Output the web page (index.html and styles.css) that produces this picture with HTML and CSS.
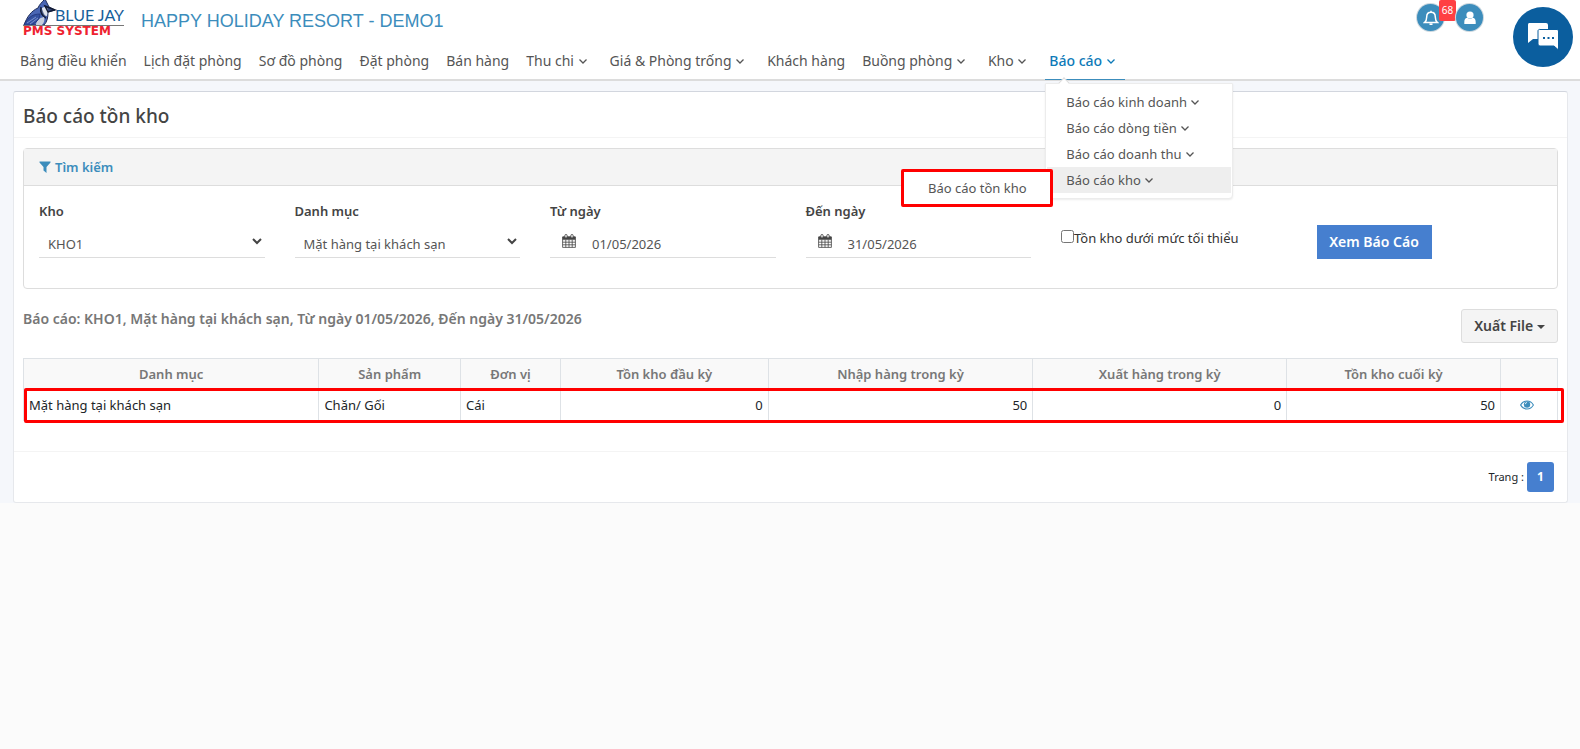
FILE: index.html
```html
<!DOCTYPE html>
<html lang="vi">
<head>
<meta charset="utf-8">
<title>Báo cáo tồn kho</title>
<link rel="stylesheet" href="styles.css">
</head>
<body>
<svg width="0" height="0" class="defs" aria-hidden="true">
  <symbol id="chev" viewBox="0 0 10 8"><path d="M1.500 2.500l3.500 3.500 3.500-3.500" fill="none" stroke="currentColor" stroke-width="1.300"/></symbol>
  <symbol id="cal" viewBox="0 0 14 14"><path d="M.6 3h12.8v10.4H.6zM.6 5.6h12.8M.6 8.2h12.8M.6 10.8h12.8M3.8 5.6v7.8M7 5.6v7.8M10.2 5.6v7.8" fill="none" stroke="currentColor" stroke-width=".8"/><path d="M.6 2.5h12.8v2.6H.6z" fill="currentColor"/><rect x="2.9" y=".5" width="2.2" height="3.4" rx="1" fill="#fff" stroke="currentColor" stroke-width=".9"/><rect x="8.9" y=".5" width="2.2" height="3.4" rx="1" fill="#fff" stroke="currentColor" stroke-width=".9"/></symbol>
</svg>
<header class="header">
  <div class="brand-row">
    <a class="logo" href="#" aria-label="Blue Jay PMS System">
      <svg viewBox="0 0 102 40" width="102" height="40">
        <path d="M1 25C4 17 8 11 15 8c1-3 4-6 7-9 1 3 3 5 4 8l6 3-7 2c0 6-1 10-4 13z" fill="#4a66b4" stroke="#1d2a55"/>
        <path d="M19 8c3-2 6-1 6 2l-1 6c-3 0-5-3-5-8z" fill="#dfe4ee"/>
        <path d="M18 7c-1 5 1 9 5 11M22 6l10 4-7 2z" fill="#222b48" fill-opacity=".5" stroke="#111a33" stroke-width="1.400"/>
        <path d="M13 25c0-4 3-7 8-8 1 3 0 6-2 8z" fill="#c6cedd"/>
        <path d="M1 25c4-8 9-11 16-11 0 5-4 9-9 11z" fill="#3350a0" stroke="#22357a" stroke-width=".8"/>
        <path d="M4 23l9-6M7 24l8-6" stroke="#8ea2d8" stroke-width=".8"/>
        <path d="M0 25.500h101" stroke="#777" stroke-width="1"/>
        <text x="32" y="21" class="logo-blue">BLUE JAY</text>
        <text x="0" y="35" class="logo-red">PMS SYSTEM</text>
      </svg>
    </a>
    <h1 class="hotel">HAPPY HOLIDAY RESORT - DEMO1</h1>
    <div class="user-tools">
      <button class="round" aria-label="Thông báo"><svg width="16" height="16" viewBox="0 0 16 16"><path d="M1.500 12.500h13c-2-1.500-2.200-3-2.200-5.500 0-3-1.800-4.700-4.300-4.700S3.700 4 3.700 7c0 2.500-.2 4-2.200 5.500zM8 .8v1.500M6.500 14.200h3" fill="none" stroke="#fff" stroke-width="1.500"/></svg><span class="badge">68</span></button>
      <button class="round" aria-label="Tài khoản"><svg width="14" height="14" viewBox="0 0 14 14"><circle cx="7" cy="4" r="3.600" fill="#fff"/><path d="M1.300 13V11c0-3 1.500-4 3-4.200 1.500 1.400 3.900 1.400 5.400 0 1.500.2 3 1.200 3 4.200v2z" fill="#fff"/></svg></button>
    </div>
    <button class="chat" aria-label="Chat"><svg width="32" height="30" viewBox="0 0 32 30"><path d="M2 1h17a2 2 0 0 1 2 2v14H6l-5 4V3a2 2 0 0 1 1-2z" fill="#fff"/><path d="M13 7.500h17a1.500 1.500 0 0 1 1.500 1.500v19l-4.500-4H13a2 2 0 0 1-2-2V9a1.500 1.500 0 0 1 2-1.500z" fill="#fff" stroke="#0b5e9e"/><path d="M16 16h2m2.500 0h2m2.500 0h2" stroke="#0b5e9e" stroke-width="2"/></svg></button>
  </div>
  <nav class="nav">
    <a href="#">Bảng điều khiển</a>
    <a href="#">Lịch đặt phòng</a>
    <a href="#">Sơ đồ phòng</a>
    <a href="#">Đặt phòng</a>
    <a href="#">Bán hàng</a>
    <a href="#" class="has-sub">Thu chi <svg class="chev"><use href="#chev"/></svg></a>
    <a href="#" class="has-sub">Giá &amp; Phòng trống <svg class="chev"><use href="#chev"/></svg></a>
    <a href="#">Khách hàng</a>
    <a href="#" class="has-sub">Buồng phòng <svg class="chev"><use href="#chev"/></svg></a>
    <a href="#" class="has-sub">Kho <svg class="chev"><use href="#chev"/></svg></a>
    <div class="nav-open">
      <a href="#" class="has-sub active">Báo cáo <svg class="chev"><use href="#chev"/></svg></a>
      <div class="menu">
        <a href="#">Báo cáo kinh doanh <svg class="chev"><use href="#chev"/></svg></a>
        <a href="#">Báo cáo dòng tiền <svg class="chev"><use href="#chev"/></svg></a>
        <a href="#">Báo cáo doanh thu <svg class="chev"><use href="#chev"/></svg></a>
        <a href="#" class="hover">Báo cáo kho <svg class="chev"><use href="#chev"/></svg></a>
        <div class="submenu"><a href="#">Báo cáo tồn kho</a></div>
      </div>
    </div>
  </nav>
</header>
<main class="page">
  <section class="card">
    <h2 class="card-title">Báo cáo tồn kho</h2>
    <div class="card-body">
      <form class="panel">
        <div class="panel-head"><svg width="12" height="12" viewBox="0 0 12 12"><path d="M.5.500h11v1L7.500 6v6L4.500 9.500V6l-4-4.500z" fill="currentColor"/></svg>Tìm kiếm</div>
        <div class="filters">
          <div class="field"><label for="kho">Kho</label><div class="control"><select id="kho"><option>KHO1</option></select><svg class="arrow" viewBox="0 0 10 7"><path d="M1 1l4 4 4-4" fill="none" stroke="currentColor" stroke-width="2"/></svg></div></div>
          <div class="field"><label for="dm">Danh mục</label><div class="control"><select id="dm"><option>Mặt hàng tại khách sạn</option></select><svg class="arrow" viewBox="0 0 10 7"><path d="M1 1l4 4 4-4" fill="none" stroke="currentColor" stroke-width="2"/></svg></div></div>
          <div class="field"><label for="from">Từ ngày</label><div class="control date"><svg class="cal"><use href="#cal"/></svg><input id="from" type="text" value="01/05/2026"></div></div>
          <div class="field"><label for="to">Đến ngày</label><div class="control date"><svg class="cal"><use href="#cal"/></svg><input id="to" type="text" value="31/05/2026"></div></div>
          <div class="field check"><input type="checkbox" id="min"><label for="min">Tồn kho dưới mức tối thiểu</label></div>
          <div class="field submit"><button type="button" class="primary">Xem Báo Cáo</button></div>
        </div>
      </form>
      <div class="summary">
        <p>Báo cáo: KHO1, Mặt hàng tại khách sạn, Từ ngày 01/05/2026, Đến ngày 31/05/2026</p>
        <button type="button" class="export">Xuất File <span class="caret"></span></button>
      </div>
      <div class="table-wrap">
        <table>
          <colgroup><col class="c1"><col class="c2"><col class="c3"><col class="c4"><col class="c5"><col class="c6"><col class="c7"><col class="c8"></colgroup>
          <thead><tr><th>Danh mục</th><th>Sản phẩm</th><th>Đơn vị</th><th>Tồn kho đầu kỳ</th><th>Nhập hàng trong kỳ</th><th>Xuất hàng trong kỳ</th><th>Tồn kho cuối kỳ</th><th></th></tr></thead>
          <tbody><tr><td>Mặt hàng tại khách sạn</td><td>Chăn/ Gối</td><td>Cái</td><td class="num">0</td><td class="num">50</td><td class="num">0</td><td class="num">50</td><td class="view"><a href="#" aria-label="Xem"><svg width="14" height="10" viewBox="0 0 14 10"><path d="M.6 5C2 2.500 4.300 1 7 1s5 1.500 6.400 4C12 7.500 9.700 9 7 9S2 7.500.6 5z" fill="none" stroke="currentColor" stroke-width="1.100"/><circle cx="7" cy="4.500" r="3.200" fill="currentColor"/><path d="M5.300 4.200A1.700 1.700 0 0 1 7 2.500" fill="none" stroke="#fff" stroke-width=".8"/></svg></a></td></tr></tbody>
        </table>
        <div class="marker"></div>
      </div>
    </div>
    <footer class="card-foot"><span>Trang :</span><button type="button" class="page-no">1</button></footer>
  </section>
</main>
</body>
</html>
```
FILE: styles.css
```css
* { box-sizing: border-box; }
body { margin: 0; background: #fbfbfb; color: #212529; font: 13px/20px "Noto Sans", "Open Sans", sans-serif; }
a { color: inherit; text-decoration: none; }
button, input, select { font: inherit; color: inherit; }
button { border: 0; padding: 0; cursor: pointer; }
.defs { position: absolute; }

.header { background: #fff; border-bottom: 2px solid #dcdcdc; position: relative; z-index: 2; }
.brand-row { display: flex; align-items: flex-start; height: 42px; padding: 0 7px 0 23px; }
.logo { display: block; }
.logo svg { display: block; overflow: visible; }
.logo-blue { font: 16px Lato, sans-serif; fill: #17609a; }
.logo-red { font: bold 12px "DejaVu Sans", sans-serif; fill: #ee2330; }
.hotel { margin: 0 0 0 16px; font: 18px/42px "Liberation Sans", Arial, sans-serif; color: #3c8dbc; }
.user-tools { display: flex; gap: 12px; margin: 4px 30px 0 auto; }
.round { position: relative; display: flex; align-items: center; justify-content: center; width: 27px; height: 27px; border-radius: 50%; background: #3c8dbc; box-shadow: 0 0 0 1px #ccd8df; }
.badge { position: absolute; left: 22px; top: -4px; width: 17px; height: 21px; border-radius: 2px; background: #ff4043; color: #fff; font-size: 10px; line-height: 21px; }
.chat { display: flex; align-items: center; justify-content: center; width: 60px; height: 60px; margin-top: 7px; border-radius: 50%; background: #0b5e9e; position: relative; z-index: 1; }

.nav { display: flex; gap: 9px; padding: 0 16px; color: #555; font-size: 14px; }
.nav > a, .nav-open > a { display: block; padding: 0 4px; line-height: 38px; height: 37px; white-space: nowrap; }
.nav .has-sub { padding-right: 9px; }
.nav .active { color: #0d7ab8; font-weight: 500; height: 38px; margin-bottom: -1px; border-bottom: 1px solid #3c8dbc; }
.nav-open { position: relative; }
.chev { width: 10px; height: 8px; vertical-align: 1px; }
.menu { position: absolute; left: 0; top: 41px; width: 188px; padding: 5px 1px; border: 1px solid #ececec; border-radius: 0 0 4px 4px; background: #fff; box-shadow: 0 1px 2px rgba(0,0,0,.08); }
.menu::before { content: ""; position: absolute; left: 14px; top: -5px; width: 7px; height: 7px; background: #fff; border: solid #ddd; border-width: 1px 0 0 1px; transform: rotate(45deg); }
.menu a { display: block; padding: 0 19px; font-size: 13px; line-height: 26px; white-space: nowrap; }
.menu .hover { background: #eee; }
.submenu { position: absolute; right: 179px; bottom: -9px; width: 152px; border: 3px solid #f00; border-radius: 2px; background: #fff; }
.submenu a { padding: 3px 0; text-align: center; }

.page { background: #f5f7fb; padding: 10px 12px 0 13px; }
.card { background: #fff; border: 1px solid #e6e8ec; border-top-color: #d2d6de; border-radius: 3px; }
.card-title { margin: 0; padding: 0 9px; font-size: 19px; font-weight: 500; line-height: 48px; height: 46px; color: #444; border-bottom: 1px solid #f4f4f4; }
.card-body { padding: 10px 9px 30px; }
.panel { border: 1px solid #ddd; border-radius: 4px; }
.panel-head { display: flex; align-items: center; gap: 4px; height: 37px; padding: 0 15px; background: #f4f4f4; border-bottom: 1px solid #ddd; color: #3c8dbc; font-weight: 600; }
.filters { display: grid; grid-template-columns: repeat(6, minmax(0, 1fr)); padding: 15px 0 29px; }
.field { padding: 0 15px; color: #555; }
.field > label { display: block; font-weight: 600; color: #444; }
.control { position: relative; display: flex; align-items: center; height: 37px; border-bottom: 1px solid #ddd; }
.control select { flex: 1; min-width: 0; appearance: none; border: 0; background: none; padding: 11px 9px 1px; height: 36px; }
.control input { flex: 1; min-width: 0; border: 0; background: none; padding: 11px 0 1px 16px; height: 36px; }
.arrow { position: absolute; right: 3px; top: 17px; width: 10px; height: 7px; color: #444; }
.date { padding-left: 12px; }
.cal { width: 14px; height: 14px; margin-top: 3px; color: #444; }
.check { display: flex; align-items: flex-start; padding-top: 27px; white-space: nowrap; }
.check input { margin: 2px 0 0; }
.check > label { font-weight: 400; color: #333; }
.submit { padding-top: 24px; }
.primary { width: 115px; height: 34px; background: #467fcf; color: #fff; font-size: 14px; font-weight: 600; }
.summary { display: flex; justify-content: space-between; padding-top: 20px; }
.summary p { margin: 0; font-size: 14px; font-weight: 600; color: #777; }
.export { width: 97px; height: 34px; border: 1px solid #ddd; border-radius: 3px; background: #f4f4f4; color: #444; font-size: 14px; font-weight: 600; }
.caret { display: inline-block; border: 4px solid transparent; border-top-color: currentColor; border-bottom: 0; vertical-align: middle; }
.table-wrap { position: relative; margin-top: 15px; }
table { width: 100%; border-collapse: collapse; table-layout: fixed; }
.c1 { width: 19.2%; } .c2 { width: 9.2%; } .c3 { width: 6.5%; } .c4 { width: 13.5%; } .c5 { width: 17.2%; } .c6 { width: 16.5%; } .c7 { width: 13.9%; } .c8 { width: 3.7%; }
th, td { border: 1px solid #dee2e6; padding: 5px; }
th { background: #f9f9f9; color: #777; font-weight: 600; }
.num { text-align: right; }
.view { text-align: center; color: #3c8dbc; padding-right: 10px; }
.marker { position: absolute; left: 1px; right: -6px; top: 30px; bottom: -2px; border: 3px solid #f00; border-radius: 2px; }
.card-foot { display: flex; justify-content: flex-end; align-items: center; gap: 3px; height: 51px; padding: 0 13px; border-top: 1px solid #f4f4f4; font-size: 11px; }
.page-no { width: 27px; height: 30px; border-radius: 3px; background: #467fcf; color: #fff; font-size: 12px; font-weight: 700; }
```
